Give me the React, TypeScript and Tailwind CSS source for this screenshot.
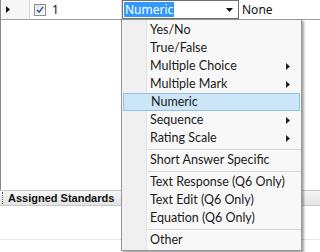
import React from "react";

const items: { label: string; sub?: boolean; sel?: boolean; sep?: boolean }[] = [
  { label: "Yes/No" },
  { label: "True/False" },
  { label: "Multiple Choice", sub: true },
  { label: "Multiple Mark", sub: true },
  { label: "Numeric", sel: true },
  { label: "Sequence", sub: true },
  { label: "Rating Scale", sub: true },
  { label: "", sep: true },
  { label: "Short Answer Specific" },
  { label: "", sep: true },
  { label: "Text Response (Q6 Only)" },
  { label: "Text Edit (Q6 Only)" },
  { label: "Equation (Q6 Only)" },
  { label: "", sep: true },
  { label: "Other" },
];

function SubArrow() {
  return (
    <svg width="4" height="7" viewBox="0 0 4 7" className="absolute right-[10px] top-[6px]">
      <path d="M0 0 L4 3.5 L0 7 Z" fill="#222" />
    </svg>
  );
}

export default function App() {
  return (
    <div
      className="relative w-[320px] h-[252px] overflow-hidden bg-white"
      style={{ fontFamily: '"Noto Sans", sans-serif' }}
    >
      {/* grid area */}
      <div className="flex flex-col h-[190px] border-l border-[#8a8a8a]">
        <div className="flex h-[20px] border-b border-[#a0a0a0] text-[12px] text-[#111]">
          <div className="w-[29px] flex items-center pl-[5px] border-r border-[#d8d8d8] bg-[#f7f7f7]">
            <svg width="4" height="7" viewBox="0 0 4 7">
              <path d="M0 0 L4 3.5 L0 7 Z" fill="#111" />
            </svg>
          </div>
          <div className="w-[92px] flex items-center pl-[4px] border-r border-[#d8d8d8]">
            <div className="w-[12px] h-[12px] border border-[#8f8f8f] bg-gradient-to-br from-[#e4e4e4] to-[#fafafa] flex items-center justify-center">
              <svg width="8" height="8" viewBox="0 0 9 9">
                <path d="M1 4.5 L3.5 7 L8 1" stroke="#2a4fa8" strokeWidth="1.6" fill="none" />
              </svg>
            </div>
            <span className="ml-[6px]">1</span>
          </div>
          <div className="w-[117px] flex items-center border border-[#6f6f6f] bg-white">
            <span className="bg-[#3399ff] text-white px-[1px] leading-[15px] ml-[1px]">Numeric</span>
            <div className="flex-1" />
            <svg width="7" height="4" viewBox="0 0 7 4" className="mr-[5px]">
              <path d="M0 0 L7 0 L3.5 4 Z" fill="#111" />
            </svg>
          </div>
          <div className="flex-1 flex items-center pl-[3px]">None</div>
        </div>
        <div className="flex-1" />
      </div>

      {/* bottom panel header */}
      <div className="flex items-center h-[16px] border-t border-[#8a8a8a] bg-gradient-to-b from-[#f6f6f6] to-[#e3e3e3] border-b border-[#c8c8c8]">
        <div className="w-[1px] h-[12px] ml-[2px] border-l border-dotted border-[#666]" />
        <span
          className="ml-[5px] text-[11px] font-bold text-[#111]"
          style={{ fontFamily: '"Liberation Sans", Arial, sans-serif' }}
        >
          Assigned Standards
        </span>
      </div>
      <div className="h-[34px] border-b border-[#e6e6e6]" />

      {/* dropdown menu */}
      <div
        className="absolute left-[121px] top-[19px] w-[181px] border border-[#979797] bg-[#f8f8f8] py-[1px] shadow-[2px_2px_2px_rgba(0,0,0,0.35)] text-[12.5px] text-[#1a1a1a]"
        style={{ fontFamily: 'Lato, "Noto Sans", sans-serif' }}
      >
        <div className="absolute left-[24px] top-0 bottom-0 w-[1px] bg-[#e2e3e3]" />
        <div className="absolute left-0 top-0 bottom-0 w-[24px] bg-[#f0f0f0]" />
        {items.map((it, i) =>
          it.sep ? (
            <div key={i} className="relative h-[4px] flex items-center pl-[26px]">
              <div className="h-[1px] w-full bg-[#d7d7d7]" />
            </div>
          ) : (
            <div
              key={i}
              className={
                "relative h-[18px] flex items-center pl-[27px] mx-[1px] " +
                (it.sel ? "bg-[#cde6f7] border border-[#8fc3ea] pl-[26px]" : "")
              }
            >
              <span className="relative">{it.label}</span>
              {it.sub && <SubArrow />}
            </div>
          )
        )}
      </div>
    </div>
  );
}
